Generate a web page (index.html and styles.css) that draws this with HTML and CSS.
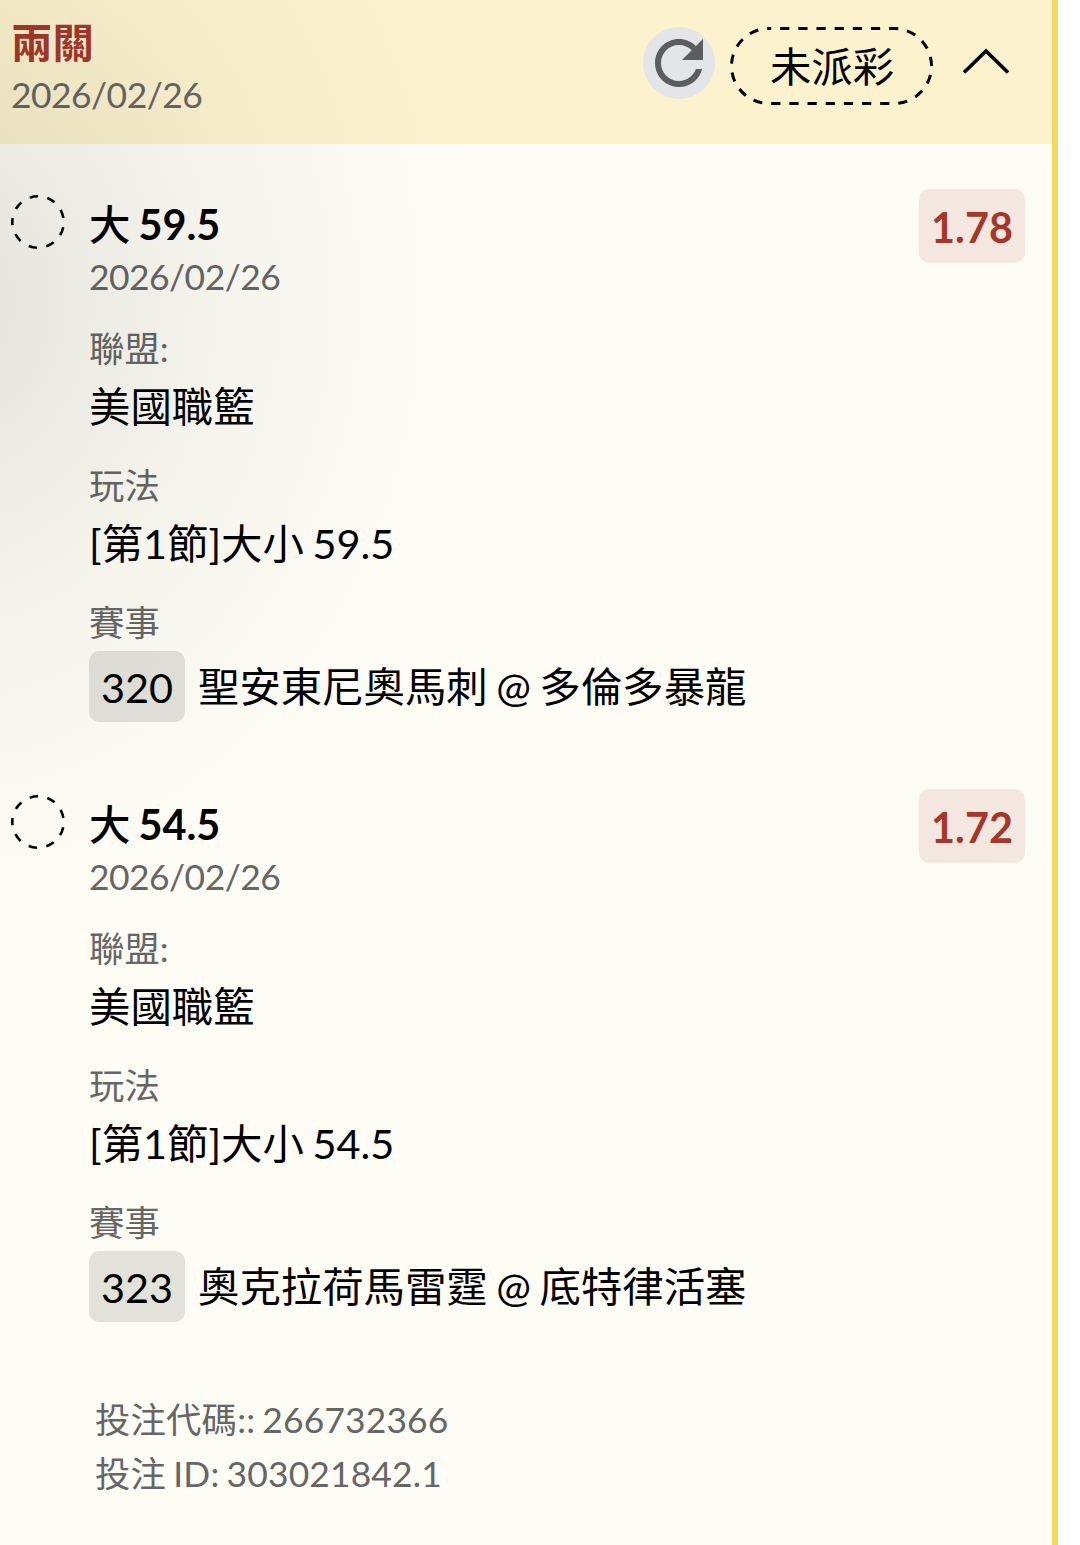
FILE: index.html
```html
<!DOCTYPE html>
<html lang="zh-Hant">
<head>
	<meta charset="utf-8">
	<title>兩關</title>
	<meta name="viewport" content="width=device-width, initial-scale=1.0">
	<link rel="stylesheet" href="styles.css">
</head>
<body>
	<div class="ticket">
		<div class="header">
			<div class="headerText">
				<h2>兩關</h2>
				<p class="date">2026/02/26</p>
			</div>
			<div class="actions">
				<button class="refresh">
					<svg width="72" height="72" viewBox="0 0 24 24">
						<path fill="#5c5d5f" d="M17.65 6.35C16.2 4.9 14.21 4 12 4c-4.42 0-7.99 3.58-7.99 8s3.57 8 7.99 8c3.73 0 6.84-2.55 7.73-6h-2.08c-.82 2.33-3.04 4-5.65 4-3.31 0-6-2.69-6-6s2.69-6 6-6c1.66 0 3.14.69 4.22 1.78L13 11h7V4l-2.35 2.35z"/>
					</svg>
				</button>
				<div class="status">
					<svg class="outline" width="204" height="78" viewBox="0 0 204 78">
						<rect x="1.5" y="1.5" width="200" height="75" rx="37.5" stroke-dasharray="9.2 8.96" stroke-dashoffset="7"/>
					</svg>
					<span>未派彩</span>
				</div>
				<svg class="arrow" width="50" height="30" viewBox="0 0 50 30">
					<path d="M3 25.5L25 4l22 21.5" fill="none" stroke="#000" stroke-width="3.6"/>
				</svg>
			</div>
		</div>

		<div class="content">
			<div class="bet">
				<svg class="circle" width="56" height="56" viewBox="0 0 56 56">
					<circle cx="28" cy="28" r="25.7" stroke-dasharray="8.4 9.54" stroke-dashoffset="4.2" transform="rotate(180 28 28)"/>
				</svg>
				<div class="details">
					<h3><span>大</span> 59.5</h3>
					<p class="date">2026/02/26</p>
					<div class="group">
						<p class="label">聯盟:</p>
						<p class="value">美國職籃</p>
					</div>
					<div class="group">
						<p class="label">玩法</p>
						<p class="value">[第1節]大小 59.5</p>
					</div>
					<div class="group">
						<p class="label">賽事</p>
						<p class="match"><span class="number">320</span><span>聖安東尼奧馬刺 @ 多倫多暴龍</span></p>
					</div>
				</div>
				<b class="odds">1.78</b>
			</div>

			<div class="bet">
				<svg class="circle" width="56" height="56" viewBox="0 0 56 56">
					<circle cx="28" cy="28" r="25.7" stroke-dasharray="8.4 9.54" stroke-dashoffset="4.2" transform="rotate(180 28 28)"/>
				</svg>
				<div class="details">
					<h3><span>大</span> 54.5</h3>
					<p class="date">2026/02/26</p>
					<div class="group">
						<p class="label">聯盟:</p>
						<p class="value">美國職籃</p>
					</div>
					<div class="group">
						<p class="label">玩法</p>
						<p class="value">[第1節]大小 54.5</p>
					</div>
					<div class="group">
						<p class="label">賽事</p>
						<p class="match"><span class="number">323</span><span>奧克拉荷馬雷霆 @ 底特律活塞</span></p>
					</div>
				</div>
				<b class="odds">1.72</b>
			</div>

			<div class="codes">
				<p>投注代碼:: 266732366</p>
				<p>投注 ID: 303021842.1</p>
			</div>
		</div>
	</div>
</body>
</html>
```

FILE: styles.css
```css
*{
	margin:0;
	padding:0;
	box-sizing:border-box;
}

body{
	font-family:Lato, "Noto Sans CJK TC", sans-serif;
	font-size:41.4px;
	word-spacing:-2px;
	color:#000;
	background:#fff;
}

.ticket{
	position:relative;
	width:1058px;
	height:1545px;
	overflow:hidden;
	border-right:6px solid #f4d85f;
	background:#fefdf5;
}

/* soft shade on the left side */
.ticket::before{
	content:"";
	position:absolute;
	inset:0;
	background:radial-gradient(ellipse 560px 660px at -60px 300px, rgba(20,20,20,0.11), rgba(20,20,20,0.085) 20%, rgba(20,20,20,0.035) 52%, rgba(20,20,20,0.01) 80%, transparent);
	pointer-events:none;
}

.header{
	display:flex;
	justify-content:space-between;
	height:144px;
	padding:16px 41px 0 11px;
	background:#fcf2ce;
}

.header h2{
	font-size:41.4px;
	font-weight:700;
	line-height:52px;
	color:#a5372a;
}

.date, .label{
	font-size:35.4px;
	line-height:53px;
	color:#666;
}

.date{
	letter-spacing:-0.5px;
}

.actions{
	display:flex;
	align-items:flex-start;
	padding-top:11px;
}

.refresh{
	width:72px;
	height:72px;
	border:none;
	border-radius:50%;
	background:#e4e5e8;
}

.refresh svg{
	display:block;
}

.status{
	position:relative;
	width:204px;
	height:78px;
	margin-left:15px;
	line-height:78px;
	text-align:center;
}

.outline{
	position:absolute;
	top:0;
	left:0;
}

.outline rect, .circle circle{
	fill:none;
	stroke:#000;
	stroke-width:3;
}

.circle circle{
	stroke-width:2.6;
}

.arrow{
	margin:20px 0 0 27px;
}

.content{
	padding:45px 27px 0 10px;
}

.bet{
	display:flex;
	align-items:flex-start;
	height:599.5px;
}

.circle{
	margin-top:5px;
	flex-shrink:0;
}

.details{
	flex:1;
	padding:9px 0 0 23px;
}

.details h3{
	font-size:41.4px;
	font-weight:700;
	line-height:52px;
}

.details h3 span{
	font-weight:500;
}

.group{
	margin-bottom:22.2px;
}

.date + .group{
	margin-top:19px;
}

.value{
	line-height:62px;
}

.match{
	display:flex;
	margin-top:2px;
	line-height:71px;
}

.number{
	width:96px;
	height:71px;
	margin-right:13px;
	border-radius:10px;
	text-align:center;
	line-height:72px;
	background:rgba(0,0,0,0.11);
}

.odds{
	width:106px;
	height:74px;
	border-radius:10px;
	text-align:center;
	line-height:77px;
	color:#a5372a;
	background:#f4e7e0;
}

.codes{
	padding:5px 0 0 85px;
	font-size:35.4px;
	line-height:54px;
	letter-spacing:0.15px;
	color:#666;
}
```
